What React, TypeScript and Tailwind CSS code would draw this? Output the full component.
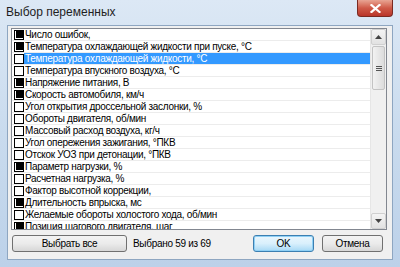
import { useState } from 'react'

type Row = { label: string; checked: boolean }

const rows: Row[] = [
  { label: 'Число ошибок,', checked: true },
  { label: 'Температура охлаждающей жидкости при пуске, °C', checked: true },
  { label: 'Температура охлаждающей жидкости, °C', checked: false },
  { label: 'Температура впускного воздуха, °C', checked: false },
  { label: 'Напряжение питания, В', checked: true },
  { label: 'Скорость автомобиля, км/ч', checked: true },
  { label: 'Угол открытия дроссельной заслонки, %', checked: false },
  { label: 'Обороты двигателя, об/мин', checked: false },
  { label: 'Массовый расход воздуха, кг/ч', checked: false },
  { label: 'Угол опережения зажигания, °ПКВ', checked: false },
  { label: 'Отскок УОЗ при детонации, °ПКВ', checked: false },
  { label: 'Параметр нагрузки, %', checked: true },
  { label: 'Расчетная нагрузка, %', checked: false },
  { label: 'Фактор высотной коррекции,', checked: false },
  { label: 'Длительность впрыска, мс', checked: true },
  { label: 'Желаемые обороты холостого хода, об/мин', checked: false },
  { label: 'Позиция шагового двигателя, шаг', checked: true },
]

function Check({ on }: { on: boolean }) {
  return (
    <div className="w-[10px] h-[10px] shrink-0 border border-black bg-white flex items-center justify-center">
      {on && <div className="w-[7px] h-[7px] bg-black" />}
    </div>
  )
}

function Arrow({ up }: { up: boolean }) {
  return (
    <div className="h-[16px] shrink-0 flex items-center justify-center bg-gradient-to-b from-[#f4f4f4] to-[#e2e2e2] border border-[#d0d0d0] rounded-[2px]">
      <svg width="7" height="4" viewBox="0 0 7 4">
        <path d={up ? 'M0 4 L3.5 0 L7 4 Z' : 'M0 0 L3.5 4 L7 0 Z'} fill="#444" />
      </svg>
    </div>
  )
}

export default function App() {
  const [selected] = useState(2)
  const font = { fontFamily: '"Liberation Sans", Arial, sans-serif' }

  return (
    <div
      className="w-[400px] h-[267px] overflow-hidden flex flex-col bg-gradient-to-b from-[#dce8f5] via-[#c9dbee] to-[#bcd1e9] text-black"
      style={font}
    >
      {/* title bar */}
      <div className="h-[25px] shrink-0 flex items-start justify-between pl-[6px] pr-[7px]">
        <span className="text-[12px] leading-none mt-[6px] text-[#1e1e1e]">Выбор переменных</span>
        <div className="w-[36px] h-[17px] rounded-b-[4px] border border-t-0 border-[#7a2a22] bg-gradient-to-b from-[#e8a493] via-[#cf5a48] to-[#b9352a] flex items-center justify-center">
          <svg width="11" height="9" viewBox="0 0 11 9">
            <path d="M1.5 1 L9.5 8 M9.5 1 L1.5 8" stroke="#fff" strokeWidth="2.2" strokeLinecap="square" />
          </svg>
        </div>
      </div>

      {/* client area */}
      <div className="flex-1 mx-[7px] mb-[7px] bg-[#f0f0f0] border border-[#8ea6c1] flex flex-col pl-[3px] pr-[5px] pt-[2px]">
        <div className="h-[202px] shrink-0 bg-white border border-[#828790] flex overflow-hidden">
          <div className="flex-1 flex flex-col overflow-hidden">
            {rows.map((r, i) => (
              <div key={i} className="h-[12px] shrink-0 flex items-center border-b border-[#ececec]">
                <div className="w-[12px] shrink-0 flex justify-end pl-[1px]">
                  <Check on={r.checked} />
                </div>
                <div
                  className={
                    'flex-1 h-full flex items-center pl-[1px] text-[10px] tracking-[-0.3px] leading-none whitespace-nowrap overflow-hidden ' +
                    (i === selected ? 'bg-[#3399ff] text-white' : '')
                  }
                >
                  {r.label}
                </div>
              </div>
            ))}
          </div>
          {/* scrollbar */}
          <div className="w-[16px] shrink-0 bg-[#f0f0f0] border-l border-[#e6e6e6] flex flex-col">
            <Arrow up />
            <div className="flex-1 flex flex-col">
              <div className="h-[44px] mx-[1px] mt-[1px] rounded-[2px] border border-[#c3c3c3] bg-gradient-to-r from-[#f2f2f2] to-[#dcdcdc] flex flex-col items-center justify-center gap-[1px]">
                <div className="w-[6px] h-[1px] bg-[#555]" />
                <div className="w-[6px] h-[1px] bg-[#555]" />
                <div className="w-[6px] h-[1px] bg-[#555]" />
              </div>
            </div>
            <Arrow up={false} />
          </div>
        </div>

        {/* bottom bar */}
        <div className="flex items-center mt-[5px] text-[10px] tracking-[-0.3px]">
          <button className="w-[115px] h-[17px] ml-[1px] rounded-[3px] border border-[#707070] bg-gradient-to-b from-[#f3f3f3] via-[#ebebeb] to-[#d7d7d7] leading-none">
            Выбрать все
          </button>
          <span className="ml-[6px] leading-none">Выбрано 59 из 69</span>
          <button className="ml-auto w-[61px] h-[17px] rounded-[3px] border border-[#3c7fb1] bg-gradient-to-b from-[#eaf6fd] via-[#d9f0fc] to-[#a7d9f5] shadow-[inset_0_0_0_1px_#8fd0f5] leading-none">
            OK
          </button>
          <button className="ml-[8px] mr-[4px] w-[61px] h-[17px] rounded-[3px] border border-[#707070] bg-gradient-to-b from-[#f3f3f3] via-[#ebebeb] to-[#d7d7d7] leading-none">
            Отмена
          </button>
        </div>
      </div>
    </div>
  )
}
